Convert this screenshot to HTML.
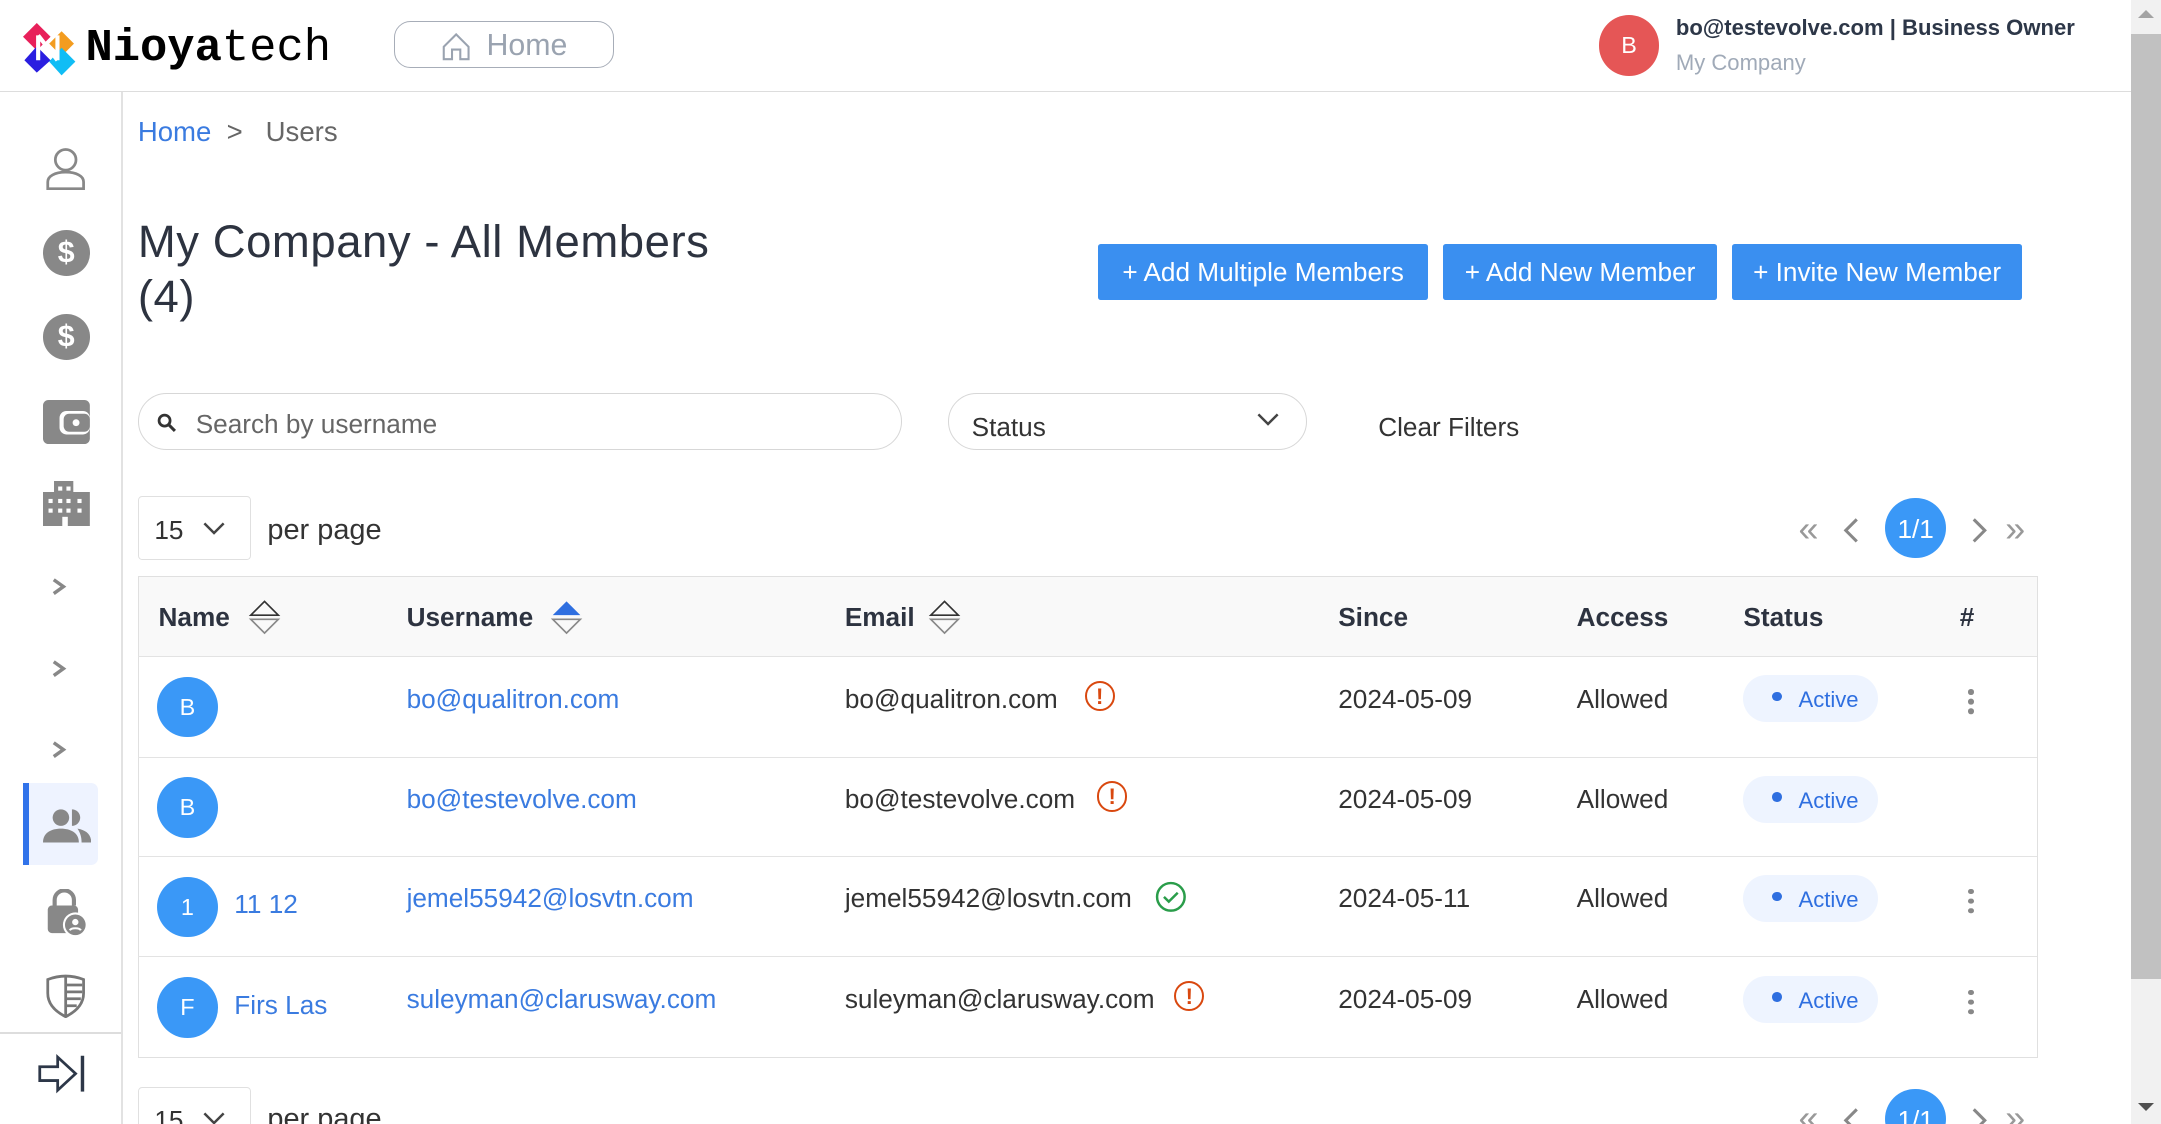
<!DOCTYPE html>
<html><head><meta charset="utf-8">
<style>
html,body{margin:0;padding:0;background:#fff;overflow:hidden;width:2161px;height:1124px}
#w{position:relative;width:1568px;height:816px;zoom:1.37819;font-family:"Liberation Sans",sans-serif;color:#333;overflow:hidden}
.a{position:absolute;white-space:nowrap}
.hd{font-weight:bold;font-size:19px;color:#2d3340}
.td{font-size:19px;color:#333}
.lk{font-size:19px;color:#3a7be0}
.av{position:absolute;width:44px;height:44px;border-radius:50%;background:#3a98f7;color:#fff;font-size:17px;text-align:center;line-height:44px}
.badge{position:absolute;width:98px;height:34px;border-radius:17px;background:#eef4ff;color:#2f6fe0;font-size:16px;line-height:36px}
.badge:before{content:"";position:absolute;left:21px;top:12px;width:7px;height:7px;border-radius:50%;background:#2f6fe0}
.badge span{position:absolute;left:40px}
.dots{position:absolute;width:4px;height:4px;border-radius:50%;background:#888;box-shadow:0 7px 0 #888,0 14px 0 #888}
.btn{position:absolute;top:177px;height:41px;background:#3a8ff0;color:#fff;font-size:19px;line-height:42px;text-align:center;border-radius:2px}
.row{position:absolute;left:100px;width:1378px;border-top:1px solid #e3e3e3}
</style></head><body><div id="w">
<div class="a" style="left:0;top:66px;width:1546px;height:1px;background:#ddd"></div>
<svg class="a" style="left:17px;top:17px" width="40" height="38" viewBox="0 0 40 38">
<path d="M10 0 L20 10 L10 20 L0 10Z" fill="#e8205a"/><path d="M28 6 L37 15 L28 24 L19 15Z" fill="#f39c1f"/>
<path d="M10 17 L20 27 L10 36 L1 27Z" fill="#2a1ee0"/><path d="M28 18 L38 28 L28 38 L19 28Z" fill="#10bdf5"/>
<path d="M11 9v18M11 9l14 18M25 9v18" stroke="#fff" stroke-width="3" fill="none"/></svg>
<div class="a" style="left:62px;top:16px;font-family:'Liberation Mono',monospace;font-size:33px;color:#000;letter-spacing:0px"><b>Nioya</b>tech</div>
<div class="a" style="left:286px;top:15px;width:158px;height:33px;border:1px solid #a7adb8;border-radius:12px"></div>
<svg class="a" style="left:320px;top:24px" width="22" height="20" viewBox="0 0 22 20"><path d="M2 10 L11 1 L20 10 V19 H14 V12 H8 V19 H2Z" fill="none" stroke="#9aa3b0" stroke-width="1.5"/></svg>
<div class="a" style="left:353px;top:21px;font-size:22px;color:#9aa3b0">Home</div>
<div class="a" style="left:1160px;top:11px;width:44px;height:44px;border-radius:50%;background:#e55656;color:#fff;font-size:17px;text-align:center;line-height:44px">B</div>
<div class="a" style="left:1216px;top:11px;font-size:16px;font-weight:bold;color:#2d3748">bo@testevolve.com | Business Owner</div>
<div class="a" style="left:1216px;top:36px;font-size:16px;color:#a0aab8">My Company</div>
<div class="a" style="left:1546px;top:0;width:22px;height:816px;background:#f1f1f1"></div>
<div class="a" style="left:1546px;top:25px;width:22px;height:685px;background:#c1c1c1"></div>
<div class="a" style="left:1551px;top:7px;width:0;height:0;border:6px solid transparent;border-bottom:6px solid #a3a3a3;border-top:0"></div>
<div class="a" style="left:1551px;top:800px;width:0;height:0;border:6px solid transparent;border-top:6px solid #505050;border-bottom:0"></div>
<div class="a" style="left:88px;top:67px;width:1px;height:749px;background:#e2e2e2"></div>
<svg class="a" style="left:33px;top:106px" width="30" height="32" viewBox="0 0 30 32"><circle cx="15" cy="10" r="7.5" fill="none" stroke="#888" stroke-width="2"/><path d="M2 31 V26 C2 22 7 19 15 19 C23 19 28 22 28 26 V31Z" fill="none" stroke="#888" stroke-width="2"/></svg>
<div class="a" style="left:31px;top:167px;width:34px;height:33px;border-radius:50%;background:#888;color:#fff;font-weight:bold;font-size:22px;text-align:center;line-height:33px">$</div>
<div class="a" style="left:31px;top:228px;width:34px;height:33px;border-radius:50%;background:#888;color:#fff;font-weight:bold;font-size:22px;text-align:center;line-height:33px">$</div>
<svg class="a" style="left:31px;top:290px" width="34" height="32" viewBox="0 0 34 32"><rect x="0" y="0" width="34" height="32" rx="4" fill="#888"/><rect x="12" y="8" width="22" height="17" rx="5" fill="#fff"/><rect x="15" y="10" width="19" height="13" rx="4" fill="#888"/><circle cx="24" cy="16.5" r="2.5" fill="#fff"/></svg>
<svg class="a" style="left:31px;top:349px" width="34" height="33" viewBox="0 0 34 33"><path d="M8 0h14v8h12v25H0V8h8z" fill="#888"/><g fill="#fff"><rect x="11" y="4" width="3" height="3"/><rect x="17" y="4" width="3" height="3"/><rect x="4" y="13" width="3" height="3"/><rect x="11" y="13" width="3" height="3"/><rect x="17" y="13" width="3" height="3"/><rect x="25" y="13" width="3" height="3"/><rect x="4" y="20" width="3" height="3"/><rect x="11" y="20" width="3" height="3"/><rect x="17" y="20" width="3" height="3"/><rect x="25" y="20" width="3" height="3"/><rect x="14" y="26" width="4" height="7"/></g></svg>
<svg class="a" style="left:37px;top:419px" width="12" height="14"><path d="M2 2l7 5-7 5" fill="none" stroke="#888" stroke-width="2.5"/></svg>
<svg class="a" style="left:37px;top:478px" width="12" height="14"><path d="M2 2l7 5-7 5" fill="none" stroke="#888" stroke-width="2.5"/></svg>
<svg class="a" style="left:37px;top:537px" width="12" height="14"><path d="M2 2l7 5-7 5" fill="none" stroke="#888" stroke-width="2.5"/></svg>
<div class="a" style="left:17px;top:568px;width:54px;height:60px;background:#eef3ff;border-radius:0 5px 5px 0"></div>
<div class="a" style="left:17px;top:568px;width:4px;height:60px;background:#3173ea"></div>
<svg class="a" style="left:31px;top:586px" width="35" height="26" viewBox="0 0 35 26"><circle cx="13" cy="7" r="6" fill="#888"/><path d="M0 25c0-7 6-10 13-10s13 3 13 10z" fill="#888"/><path d="M21 1a6 6 0 0 1 0 12" fill="#888"/><path d="M25 15c6 1 10 4 10 10h-7c0-4-1-7-3-10z" fill="#888"/></svg>
<svg class="a" style="left:33px;top:645px" width="32" height="34" viewBox="0 0 32 34"><path d="M7 12V8a7 7 0 0 1 14 0v4" fill="none" stroke="#888" stroke-width="3"/><rect x="2" y="12" width="22" height="20" rx="3" fill="#888"/><circle cx="22" cy="26" r="9" fill="#fff"/><circle cx="22" cy="26" r="7.5" fill="#888"/><circle cx="22" cy="24" r="2.3" fill="#fff"/><path d="M18 30c1-2 7-2 8 0" stroke="#fff" stroke-width="1.5" fill="none"/></svg>
<svg class="a" style="left:33px;top:707px" width="30" height="32" viewBox="0 0 30 32"><path d="M2 4 Q15 -1 28 4 V14 C28 23 21 28 15 31 C9 28 2 23 2 14Z" fill="none" stroke="#777" stroke-width="2"/><path d="M15 2V30M15 8h12M15 13h12M15 18h11M15 23h8" stroke="#777" stroke-width="2"/></svg>
<div class="a" style="left:0;top:749px;width:88px;height:1px;background:#ddd"></div>
<svg class="a" style="left:27px;top:764px" width="36" height="30" viewBox="0 0 36 30"><path d="M2 10h13V3l13 12-13 12v-7H2z" fill="none" stroke="#2d3748" stroke-width="2"/><path d="M33 2v26" stroke="#2d3748" stroke-width="2.5"/></svg>
<div class="a" style="left:100px;top:84px;font-size:20px;color:#3a7be0">Home <span style="color:#666">&nbsp;&gt;&nbsp;&nbsp; Users</span></div>
<div class="a" style="left:100px;top:155px;font-size:33px;color:#2d3340;line-height:40px;letter-spacing:0.4px">My Company - All Members<br>(4)</div>
<div class="btn" style="left:797px;width:239px">+ Add Multiple Members</div>
<div class="btn" style="left:1047px;width:199px">+ Add New Member</div>
<div class="btn" style="left:1257px;width:210px">+ Invite New Member</div>
<div class="a" style="left:100px;top:285px;width:553px;height:40px;border:1px solid #d7d7d7;border-radius:21px"></div>
<svg class="a" style="left:114px;top:300px" width="14" height="14"><circle cx="5.5" cy="5.5" r="4" fill="none" stroke="#333" stroke-width="2"/><path d="M8.5 8.5l4.5 4.5" stroke="#333" stroke-width="2.2"/></svg>
<div class="a" style="left:142px;top:297px;font-size:19px;color:#666">Search by username</div>
<div class="a" style="left:688px;top:285px;width:259px;height:40px;border:1px solid #d7d7d7;border-radius:21px"></div>
<div class="a" style="left:705px;top:299px;font-size:19px;color:#333">Status</div>
<svg class="a" style="left:912px;top:300px" width="16" height="10"><path d="M1 1l7 7 7-7" fill="none" stroke="#444" stroke-width="1.8"/></svg>
<div class="a" style="left:1000px;top:299px;font-size:19px;color:#333">Clear Filters</div>
<div class="a" style="left:100px;top:360px;width:81px;height:45px;border:1px solid #e0e0e0;border-radius:3px"></div>
<div class="a" style="left:112px;top:374px;font-size:19px">15</div>
<svg class="a" style="left:147px;top:379px" width="16" height="10"><path d="M1 1l7 7 7-7" fill="none" stroke="#444" stroke-width="1.8"/></svg>
<div class="a" style="left:194px;top:373px;font-size:21px">per page</div>
<div class="a" style="left:1305px;top:369px;font-size:26px;color:#999">«</div>
<svg class="a" style="left:1337px;top:376px" width="12" height="18"><path d="M10 1L2 9l8 8" fill="none" stroke="#888" stroke-width="2.2"/></svg>
<div class="a" style="left:1368px;top:361px;width:44px;height:44px;border-radius:50%;background:#3a98f7;color:#fff;font-size:19px;text-align:center;line-height:45px">1/1</div>
<svg class="a" style="left:1430px;top:376px" width="12" height="18"><path d="M2 1l8 8-8 8" fill="none" stroke="#888" stroke-width="2.2"/></svg>
<div class="a" style="left:1455px;top:369px;font-size:26px;color:#999">»</div>
<div class="a" style="left:100px;top:418px;width:1377px;height:348px;border:1px solid #e0e0e0"></div>
<div class="a" style="left:101px;top:419px;width:1377px;height:57px;background:#f9f9f9"></div>
<div class="row" style="top:476px"></div><div class="row" style="top:549px"></div><div class="row" style="top:621px"></div><div class="row" style="top:694px"></div>
<div class="a hd" style="left:115px;top:437px">Name</div>
<svg class="a" style="left:180px;top:435px" width="24" height="26"><path d="M2 11L12 1l10 10z" fill="none" stroke="#333" stroke-width="1.2"/><path d="M2 14l10 10 10-10z" fill="none" stroke="#888" stroke-width="1.2"/></svg>
<div class="a hd" style="left:295px;top:437px">Username</div>
<svg class="a" style="left:399px;top:435px" width="24" height="26"><path d="M2 11L12 1l10 10z" fill="#2f6fe0"/><path d="M2 14l10 10 10-10z" fill="none" stroke="#888" stroke-width="1.2"/></svg>
<div class="a hd" style="left:613px;top:437px">Email</div>
<svg class="a" style="left:673px;top:435px" width="24" height="26"><path d="M2 11L12 1l10 10z" fill="none" stroke="#333" stroke-width="1.2"/><path d="M2 14l10 10 10-10z" fill="none" stroke="#888" stroke-width="1.2"/></svg>
<div class="a hd" style="left:971px;top:437px">Since</div>
<div class="a hd" style="left:1144px;top:437px">Access</div>
<div class="a hd" style="left:1265px;top:437px">Status</div>
<div class="a hd" style="left:1422px;top:437px">#</div>

<div class="av" style="left:114px;top:491px">B</div>
<div class="a lk" style="left:295px;top:496px">bo@qualitron.com</div>
<div class="a td" style="left:613px;top:496px">bo@qualitron.com</div>
<div class="a" style="left:787px;top:494px;width:19px;height:19px;border:2px solid #d9480f;border-radius:50%;color:#d9480f;font-weight:bold;font-size:16px;text-align:center;line-height:20px">!</div>
<div class="a td" style="left:971px;top:496px">2024-05-09</div>
<div class="a td" style="left:1144px;top:496px">Allowed</div>
<div class="badge" style="left:1265px;top:490px"><span>Active</span></div>
<div class="dots" style="left:1428px;top:500px"></div>

<div class="av" style="left:114px;top:564px">B</div>
<div class="a lk" style="left:295px;top:569px">bo@testevolve.com</div>
<div class="a td" style="left:613px;top:569px">bo@testevolve.com</div>
<div class="a" style="left:796px;top:567px;width:19px;height:19px;border:2px solid #d9480f;border-radius:50%;color:#d9480f;font-weight:bold;font-size:16px;text-align:center;line-height:20px">!</div>
<div class="a td" style="left:971px;top:569px">2024-05-09</div>
<div class="a td" style="left:1144px;top:569px">Allowed</div>
<div class="badge" style="left:1265px;top:563px"><span>Active</span></div>

<div class="av" style="left:114px;top:636px">1</div>
<div class="a lk" style="left:170px;top:645px">11 12</div>
<div class="a lk" style="left:295px;top:641px">jemel55942@losvtn.com</div>
<div class="a td" style="left:613px;top:641px">jemel55942@losvtn.com</div>
<svg class="a" style="left:838px;top:639px" width="23" height="23"><circle cx="11.5" cy="11.5" r="10" fill="none" stroke="#2a9d4a" stroke-width="1.8"/><path d="M6.5 11.5l3.5 3.5 6.5-6.5" fill="none" stroke="#2a9d4a" stroke-width="1.8"/></svg>
<div class="a td" style="left:971px;top:641px">2024-05-11</div>
<div class="a td" style="left:1144px;top:641px">Allowed</div>
<div class="badge" style="left:1265px;top:635px"><span>Active</span></div>
<div class="dots" style="left:1428px;top:645px"></div>

<div class="av" style="left:114px;top:709px">F</div>
<div class="a lk" style="left:170px;top:718px">Firs Las</div>
<div class="a lk" style="left:295px;top:714px">suleyman@clarusway.com</div>
<div class="a td" style="left:613px;top:714px">suleyman@clarusway.com</div>
<div class="a" style="left:852px;top:712px;width:19px;height:19px;border:2px solid #d9480f;border-radius:50%;color:#d9480f;font-weight:bold;font-size:16px;text-align:center;line-height:20px">!</div>
<div class="a td" style="left:971px;top:714px">2024-05-09</div>
<div class="a td" style="left:1144px;top:714px">Allowed</div>
<div class="badge" style="left:1265px;top:708px"><span>Active</span></div>
<div class="dots" style="left:1428px;top:718px"></div>

<div class="a" style="left:100px;top:789px;width:81px;height:45px;border:1px solid #e0e0e0;border-radius:3px"></div>
<div class="a" style="left:112px;top:802px;font-size:19px">15</div>
<svg class="a" style="left:147px;top:807px" width="16" height="10"><path d="M1 1l7 7 7-7" fill="none" stroke="#444" stroke-width="1.8"/></svg>
<div class="a" style="left:194px;top:800px;font-size:21px">per page</div>
<div class="a" style="left:1305px;top:797px;font-size:26px;color:#999">«</div>
<svg class="a" style="left:1337px;top:804px" width="12" height="18"><path d="M10 1L2 9l8 8" fill="none" stroke="#888" stroke-width="2.2"/></svg>
<div class="a" style="left:1368px;top:790px;width:44px;height:44px;border-radius:50%;background:#3a98f7;color:#fff;font-size:19px;text-align:center;line-height:45px">1/1</div>
<svg class="a" style="left:1430px;top:804px" width="12" height="18"><path d="M2 1l8 8-8 8" fill="none" stroke="#888" stroke-width="2.2"/></svg>
<div class="a" style="left:1455px;top:797px;font-size:26px;color:#999">»</div>
</div></body></html>
